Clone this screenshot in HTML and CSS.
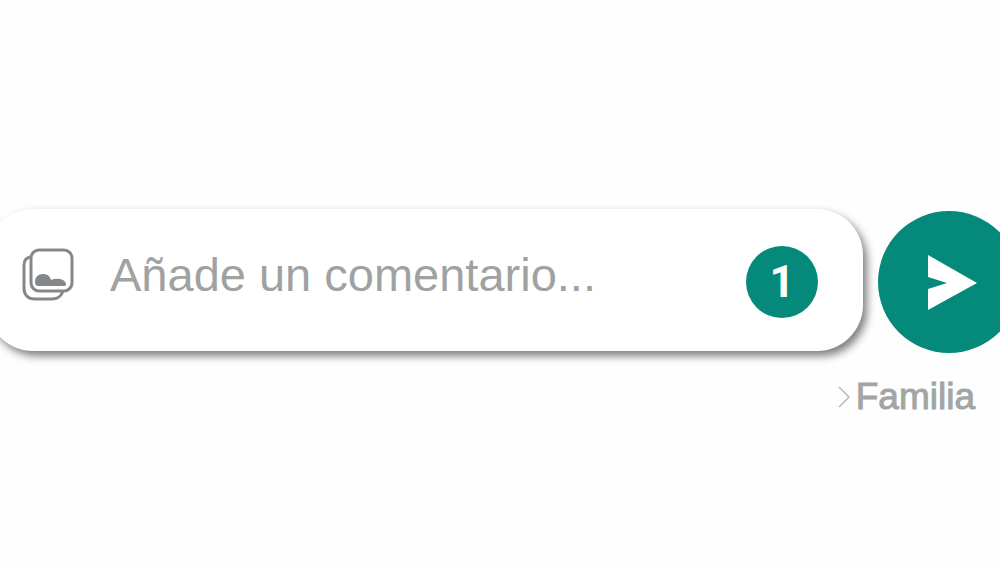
FILE: index.html
```html
<!DOCTYPE html>
<html lang="es">
<head>
    <meta charset="UTF-8">
    <meta name="viewport" content="width=device-width, initial-scale=1.0">
    <title>Añade un comentario</title>
    <link rel="stylesheet" href="styles.css">
</head>
<body>
    <form class="composer">
        <div class="comment-bar">
            <button type="button" class="gallery-button" aria-label="Galería">
                <svg class="gallery-icon" viewBox="0 0 52 54" fill="none" stroke="#85888b" stroke-width="3">
                    <path d="M8 9C4 10 2 13 2 17V40C2 47 6 51 13 51H30C36 51 39 49 41 43"/>
                    <rect x="9" y="2" width="41" height="41" rx="8"/>
                    <path fill="#85888b" stroke="none" d="M13 34C13 29 16 26 21 26C25 26 28 28 29 32C33 30 41 30 43 34C45 36 44 38 42 38H16C14 38 13 36 13 34Z"/>
                </svg>
            </button>
            <input type="text" class="comment-input" placeholder="Añade un comentario..." aria-label="Añade un comentario">
            <span class="badge">1</span>
        </div>
        <button type="submit" class="send-button" aria-label="Enviar">
            <svg class="send-icon" viewBox="0 0 142 142" fill="#fff">
                <path d="M50 44L99 72L50 99V78L69 72L50 66Z"/>
            </svg>
        </button>
    </form>
    <a href="#" class="recipient">
        <svg class="chevron" viewBox="0 0 12 22" fill="none" stroke="#b8b8b8" stroke-width="1.5">
            <path d="M1 1L11 11L1 21"/>
        </svg>
        Familia
    </a>
</body>
</html>
```
FILE: styles.css
```css
* {
    box-sizing: border-box;
}
body {
    margin: 0;
    padding-top: 209px;
    background-color: #fefefe;
    font-family: "Liberation Sans", Arial, sans-serif;
    overflow: hidden;
}
button {
    padding: 0;
    border: none;
    background: none;
    cursor: pointer;
}
svg {
    display: block;
}
/* The bar and the send button run past both edges of the screen */
.composer {
    display: flex;
    align-items: flex-end;
    gap: 15px;
    margin: 0 -20px 0 -13px;
}
.comment-bar {
    flex: 1;
    display: flex;
    align-items: flex-start;
    min-width: 0;
    padding: 37px 45px 33px 35px;
    border-radius: 46px;
    background-color: #fff;
    box-shadow: 4px 5px 9px rgba(0, 0, 0, 0.5);
}
.gallery-button {
    margin: 2px 36px 0 0;
}
.gallery-icon {
    width: 52px;
    height: 54px;
}
.comment-input {
    flex: 1;
    min-width: 0;
    height: 56px;
    padding: 0;
    border: none;
    outline: none;
    background: none;
    color: #555;
    font-family: inherit;
    font-size: 47px;
}
.comment-input::placeholder {
    color: #a0a2a2;
    opacity: 1;
}
.badge {
    display: flex;
    justify-content: center;
    align-items: center;
    width: 72px;
    height: 72px;
    border-radius: 50%;
    background-color: #04897b;
    color: #fff;
    font-family: Roboto, sans-serif;
    font-size: 44px;
    font-weight: 700;
}
.send-button {
    flex: none;
    margin-bottom: -2px;
    border-radius: 50%;
    background-color: #04897b;
}
.send-icon {
    width: 142px;
    height: 142px;
}
.recipient {
    display: flex;
    justify-content: flex-end;
    align-items: center;
    gap: 6px;
    margin-top: 24px;
    padding-right: 25px;
    color: #a3a5a5;
    font-size: 37px;
    line-height: 44px;
    text-decoration: none;
    -webkit-text-stroke: 1px #a3a5a5;
}
.chevron {
    width: 12px;
    height: 22px;
}
```
